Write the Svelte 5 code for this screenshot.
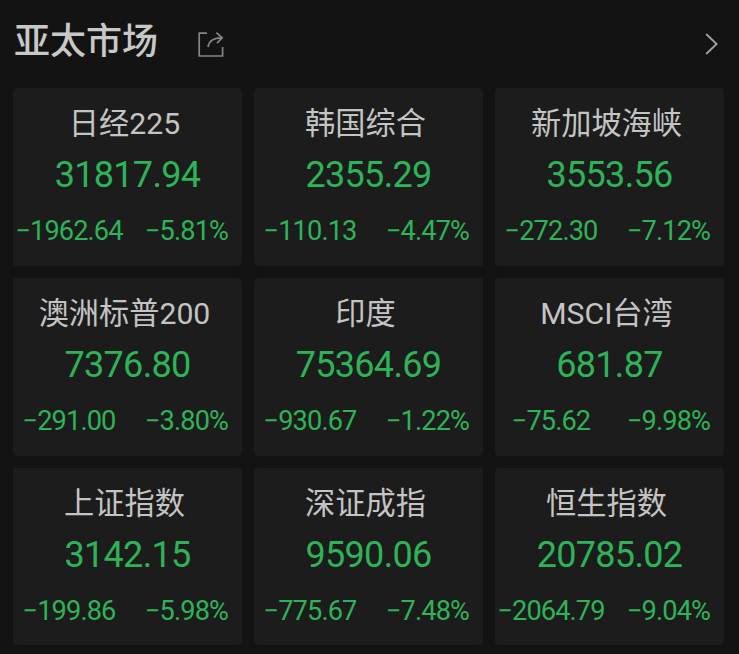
<script>
    const markets = [
        { name: '日经225', price: '31817.94', change: '-1962.64', percent: '-5.81%' },
        { name: '韩国综合', price: '2355.29', change: '-110.13', percent: '-4.47%' },
        { name: '新加坡海峡', price: '3553.56', change: '-272.30', percent: '-7.12%' },
        { name: '澳洲标普200', price: '7376.80', change: '-291.00', percent: '-3.80%' },
        { name: '印度', price: '75364.69', change: '-930.67', percent: '-1.22%' },
        { name: 'MSCI台湾', price: '681.87', change: '-75.62', percent: '-9.98%' },
        { name: '上证指数', price: '3142.15', change: '-199.86', percent: '-5.98%' },
        { name: '深证成指', price: '9590.06', change: '-775.67', percent: '-7.48%' },
        { name: '恒生指数', price: '20785.02', change: '-2064.79', percent: '-9.04%' }
    ];

    // proper minus sign for display
    const format = (value) => value.replace('-', '−');
</script>

<main class="panel">
    <header class="header">
        <h1>亚太市场</h1>
        <button class="icon-button share" aria-label="分享">
            <svg width="28" height="28" viewBox="0 0 28 28">
                <path d="M10 4.2H2.2V27H25.6V18" />
                <path d="M11 18C12 12 16 8.8 24.5 8.8M19.4 3.6L25.2 8.8L20 14.2" />
            </svg>
        </button>
        <button class="icon-button more" aria-label="更多">
            <svg width="16" height="24" viewBox="0 0 16 24">
                <path d="M2.2 2L12.6 12L2.2 22" />
            </svg>
        </button>
    </header>

    <section class="grid">
        {#each markets as market}
            <div class="card">
                <div class="name">{market.name}</div>
                <div class="price">{market.price}</div>
                <div class="row">
                    <span class="change">{format(market.change)}</span>
                    <span class="percent">{format(market.percent)}</span>
                </div>
            </div>
        {/each}
    </section>
</main>

<style>
    :global(body) {
        background: #131313;
    }

    .panel {
        box-sizing: border-box;
        width: 739px;
        height: 654px;
        padding: 0 15px 0 13px;
        overflow: hidden;
        background: #131313;
        font-family: Roboto, "Noto Sans CJK SC", sans-serif;
    }

    .header {
        display: flex;
        align-items: center;
        height: 88px;
    }

    h1 {
        margin: 0 0 4px 1px;
        color: #c8c8c8;
        font-size: 36px;
        font-weight: 500;
        line-height: 48px;
    }

    .icon-button {
        display: flex;
        padding: 0;
        border: none;
        background: none;
        cursor: pointer;
    }

    .icon-button path {
        fill: none;
        stroke: #858585;
        stroke-width: 1.7;
    }

    .share {
        margin-left: 39px;
        margin-bottom: 3px;
    }

    .more {
        margin-left: auto;
        margin-right: 4px;
    }

    .more path {
        stroke: #a0a0a0;
        stroke-width: 1.9;
    }

    .grid {
        display: grid;
        grid-template-columns: repeat(3, 229px);
        grid-auto-rows: 177.8px;
        gap: 12px;
    }

    .card {
        box-sizing: border-box;
        padding-top: 13px;
        border-radius: 4px;
        background: #1c1c1c;
        text-align: center;
        white-space: nowrap;
    }

    .name {
        height: 46px;
        padding-right: 6px;
        color: #c4c4c4;
        font-size: 30.2px;
        line-height: 46px;
    }

    .price {
        height: 57px;
        color: #2cb457;
        font-size: 36px;
        letter-spacing: -0.7px;
        line-height: 57px;
    }

    .row {
        display: grid;
        grid-template-columns: 112px 117px;
        color: #2cb457;
        font-size: 27.2px;
        letter-spacing: -0.9px;
        line-height: 54px;
    }

    .percent {
        padding-left: 6px;
    }
</style>
